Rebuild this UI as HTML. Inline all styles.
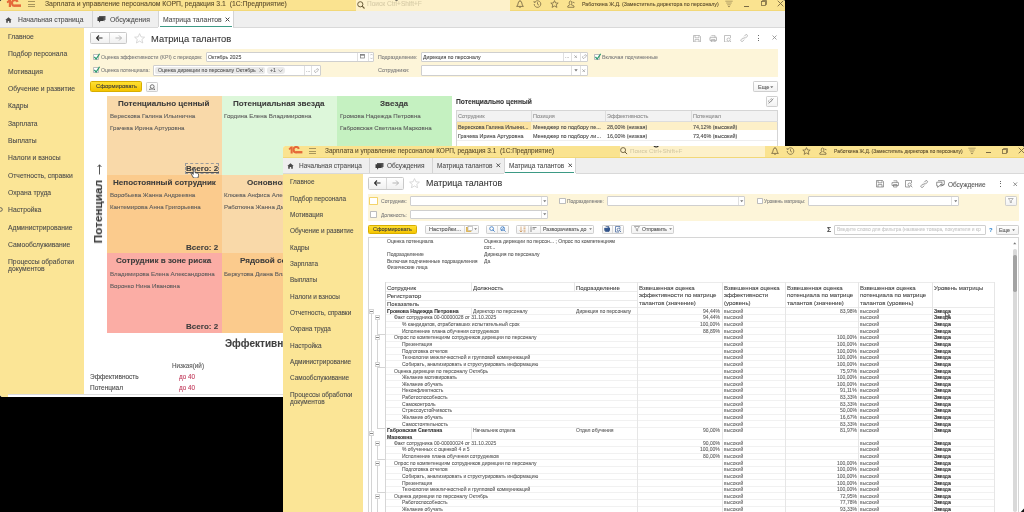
<!DOCTYPE html><html><head><meta charset="utf-8"><style>
html,body{margin:0;padding:0;width:1024px;height:512px;overflow:hidden;background:#000}
.a{position:absolute}
.t{position:absolute;white-space:pre;line-height:1.3;font-family:"Liberation Sans",sans-serif;-webkit-text-stroke:0.08px currentColor}
body{font-family:"Liberation Sans",sans-serif;position:relative}
.t{will-change:transform}
</style></head><body>
<div class="a" style="left:0;top:0;width:785px;height:397px;overflow:hidden;background:#fff;border-top-left-radius:2.5px;border-top-right-radius:2px;border-bottom-left-radius:3px">
<div class="a" style="left:0px;top:0px;width:785px;height:11.25px;background:#FAE390;"></div>
<div class="a" style="left:0px;top:10.25px;width:785px;height:1px;background:#F2D878;"></div>
<svg class="a" style="left:5.6px;top:-0.9px;" width="15.4" height="8.2" viewBox="0 0 15.4 8.2"><path d="M0.6 2.8 L3.0 0.5 L5.0 0.5 L5.0 7.9 L2.8 7.9 L2.8 3.4 L1.4 4.2 Z" fill="#E5693A"/><path d="M11.6 3.0 A2.9 2.9 0 1 0 8.9 6.9" fill="none" stroke="#E5693A" stroke-width="2.2"/><rect x="8.4" y="5.4" width="7.0" height="2.5" fill="#E5693A"/></svg>
<div class="a" style="left:27.9px;top:1px;width:7.1px;height:0.9px;background:#A8965C;"></div>
<div class="a" style="left:27.9px;top:3.5px;width:7.1px;height:0.9px;background:#A8965C;"></div>
<div class="a" style="left:27.9px;top:6px;width:7.1px;height:0.9px;background:#A8965C;"></div>
<div class="t" style="left:44.75px;top:-0.2px;font-size:6.83px;color:#5A4B2C;">Зарплата и управление персоналом КОРП, редакция 3.1  (1С:Предприятие)</div>
<div class="a" style="left:356px;top:0px;width:154px;height:11.25px;background:#FDF1CA;"></div>
<svg class="a" style="left:357px;top:1px;" width="8" height="8" viewBox="0 0 8 8"><circle cx="3.3" cy="3.3" r="2.6" fill="none" stroke="#6b5d3a" stroke-width="1"/><line x1="5.2" y1="5.2" x2="7.5" y2="7.5" stroke="#6b5d3a" stroke-width="1.1"/></svg>
<div class="t" style="left:366.6px;top:-0.01px;font-size:6.54px;color:#D6CBA6;">Поиск Ctrl+Shift+F</div>
<svg class="a" style="left:394px;top:-1px;" width="5" height="3" viewBox="0 0 5 3"><path d="M0.3 0.3 Q2.5 2.8 4.7 0.3" fill="none" stroke="#333" stroke-width="0.9"/></svg>
<svg class="a" style="left:515.5px;top:-0.4px;" width="8" height="8" viewBox="0 0 8 8"><path d="M0.6 6.4 L7.4 6.4 Q6 5.4 5.8 3 Q5.6 1.1 4 1 Q2.4 1.1 2.2 3 Q2 5.4 0.6 6.4 Z M3.2 7 Q4 8.2 4.8 7 M4 0.3 V1" fill="none" stroke="#7a6a44" stroke-width="0.85"/></svg>
<svg class="a" style="left:532.5px;top:-0.4px;" width="9" height="8" viewBox="0 0 9 8"><path d="M1.2 4 A3.3 3.3 0 1 0 2.3 1.6 M1 1 L1.2 2.5 L2.6 2.2 M4.5 2.2 L4.5 4.2 L6 5.2" fill="none" stroke="#7a6a44" stroke-width="0.8"/></svg>
<svg class="a" style="left:549.5px;top:-0.4px;" width="9" height="8" viewBox="0 0 9 8"><path d="M4.5 0.6 L5.6 3 L8.2 3.1 L6.2 4.8 L6.9 7.4 L4.5 6 L2.1 7.4 L2.8 4.8 L0.8 3.1 L3.4 3 Z" fill="none" stroke="#7a6a44" stroke-width="0.8"/></svg>
<svg class="a" style="left:566.5px;top:-0.4px;" width="9" height="8" viewBox="0 0 9 8"><path d="M3 4.5 Q1.5 3.5 2.5 1.5 Q3.5 0.5 4.5 1.5 Q5.5 3.5 4 4.5 L7 6 L7 7.3 L0.8 7.3 L0.8 6 Z M5.5 2 L7.5 2.8" fill="none" stroke="#7a6a44" stroke-width="0.8"/></svg>
<div class="t" style="left:582px;top:1.13px;font-size:5.29px;color:#5A4B2C;">Работкина Ж.Д. (Заместитель директора по персоналу)</div>
<svg class="a" style="left:724.5px;top:-0.2px;" width="8" height="9" viewBox="0 0 8 9"><path d="M0.3 1.2 H7.7 M1.2 3.0 H6.8 M2.2 4.8 H5.8" fill="none" stroke="#7a6a44" stroke-width="0.55"/><path d="M2.9 6.0 H5.1 L4 7.3 Z" fill="#7a6a44"/></svg>
<div class="a" style="left:744px;top:5.6px;width:4.6px;height:0.8px;background:#7a6a44;"></div>
<svg class="a" style="left:760.5px;top:0.1px;" width="6" height="6" viewBox="0 0 6 6"><rect x="0.5" y="1.5" width="4" height="4" fill="none" stroke="#7a6a44" stroke-width="0.8"/><path d="M1.5 1.5 V0.5 H5.5 V4.5 H4.5" fill="none" stroke="#7a6a44" stroke-width="0.8"/></svg>
<svg class="a" style="left:777px;top:-0.4px;" width="7" height="7" viewBox="0 0 7 7"><path d="M0.7 0.7 L6.3 6.3 M6.3 0.7 L0.7 6.3" stroke="#7a6a44" stroke-width="0.9"/></svg>
<div class="a" style="left:0px;top:11.25px;width:785px;height:16.25px;background:#EFEFEF;"></div>
<div class="a" style="left:0px;top:27px;width:785px;height:0.7px;background:#D9D9D9;"></div>
<svg class="a" style="left:4.5px;top:16.5px;" width="7" height="6" viewBox="0 0 7 6"><path d="M0.3 3 L3.5 0.2 L6.7 3 L5.8 3 L5.8 5.8 L4.2 5.8 L4.2 4 L2.8 4 L2.8 5.8 L1.2 5.8 L1.2 3 Z" fill="#4a4a4a"/></svg>
<div class="t" style="left:17.5px;top:15.84px;font-size:6.78px;color:#4d4d4d;">Начальная страница</div>
<div class="a" style="left:92.2px;top:11.25px;width:0.7px;height:15.95px;background:#D4D4D4;"></div>
<svg class="a" style="left:96.9px;top:15.2px;" width="9" height="8" viewBox="0 0 9 8"><path d="M2 1 H8.5 V5 H7.5 L7.5 6.5 L6 5 H2 Z" fill="#555"/><path d="M0.5 2.2 H6.5 V6 H3.5 L2 7.8 L2 6 H0.5 Z" fill="#3c3c3c"/></svg>
<div class="t" style="left:110px;top:15.86px;font-size:6.87px;color:#4d4d4d;">Обсуждения</div>
<div class="a" style="left:158px;top:11.25px;width:75px;height:16.25px;background:#FFFFFF;"></div>
<div class="a" style="left:157.6px;top:11.25px;width:0.7px;height:15.95px;background:#D4D4D4;"></div>
<div class="a" style="left:233px;top:11.25px;width:0.7px;height:15.95px;background:#D4D4D4;"></div>
<div class="a" style="left:160px;top:25.8px;width:72px;height:1.2px;background:#3D9A85;"></div>
<div class="t" style="left:163.25px;top:15.78px;font-size:6.84px;color:#4d4d4d;">Матрица талантов</div>
<svg class="a" style="left:225.3px;top:17.3px;" width="5" height="5" viewBox="0 0 5 5"><path d="M0.6 0.6 L4.4 4.4 M4.4 0.6 L0.6 4.4" stroke="#444" stroke-width="1"/></svg>
<div class="a" style="left:0px;top:27.5px;width:84px;height:366.9px;background:#FBE596;"></div>
<div class="a" style="left:0px;top:394px;width:7.8px;height:3px;background:#FBE596;"></div>
<div class="t" style="left:7.5px;top:32.84px;font-size:6.78px;color:#4a4a4a;">Главное</div>
<div class="t" style="left:7.5px;top:49.84px;font-size:6.78px;color:#4a4a4a;">Подбор персонала</div>
<div class="t" style="left:7.5px;top:67.84px;font-size:6.78px;color:#4a4a4a;">Мотивация</div>
<div class="t" style="left:7.5px;top:84.84px;font-size:6.78px;color:#4a4a4a;">Обучение и развитие</div>
<div class="t" style="left:7.5px;top:101.84px;font-size:6.78px;color:#4a4a4a;">Кадры</div>
<div class="t" style="left:7.5px;top:119.84px;font-size:6.78px;color:#4a4a4a;">Зарплата</div>
<div class="t" style="left:7.5px;top:136.84px;font-size:6.78px;color:#4a4a4a;">Выплаты</div>
<div class="t" style="left:7.5px;top:153.84px;font-size:6.78px;color:#4a4a4a;">Налоги и взносы</div>
<div class="t" style="left:7.5px;top:171.84px;font-size:6.78px;color:#4a4a4a;">Отчетность, справки</div>
<div class="t" style="left:7.5px;top:188.84px;font-size:6.78px;color:#4a4a4a;">Охрана труда</div>
<div class="t" style="left:7.5px;top:205.84px;font-size:6.78px;color:#4a4a4a;">Настройка</div>
<div class="t" style="left:7.5px;top:223.84px;font-size:6.78px;color:#4a4a4a;">Администрирование</div>
<div class="t" style="left:7.5px;top:240.84px;font-size:6.78px;color:#4a4a4a;">Самообслуживание</div>
<div class="t" style="left:7.5px;top:257.84px;font-size:6.78px;color:#4a4a4a;">Процессы обработки</div>
<div class="t" style="left:7.5px;top:264.84px;font-size:6.78px;color:#4a4a4a;">документов</div>
<svg class="a" style="left:-2px;top:206.5px;" width="5" height="5" viewBox="0 0 5 5"><circle cx="2.5" cy="2.5" r="1.8" fill="none" stroke="#555" stroke-width="0.9"/></svg>
<div class="a" style="left:90.25px;top:32.4px;width:37.15px;height:12px;background:linear-gradient(#fff,#f0f0f0);box-sizing:border-box;border:1px solid #C9C9C9;border-radius:1.5px;"></div>
<div class="a" style="left:109.3px;top:33.4px;width:0.7px;height:10px;background:#D8D8D8;"></div>
<svg class="a" style="left:96.28px;top:35.4px;" width="7" height="6" viewBox="0 0 7 6"><path d="M0.5 3 H6.5 M3 0.5 L0.5 3 L3 5.5" fill="none" stroke="#333" stroke-width="1.2"/></svg>
<svg class="a" style="left:114.85px;top:35.4px;" width="7" height="6" viewBox="0 0 7 6"><path d="M0.5 3 H6.5 M4 0.5 L6.5 3 L4 5.5" fill="none" stroke="#B5B5B5" stroke-width="1"/></svg>
<svg class="a" style="left:134px;top:33.3px;" width="11.2" height="10.6" viewBox="0 0 11.2 10.6"><path d="M5.6 0.6 L7.1 3.9 L10.6 4.2 L7.9 6.5 L8.8 10 L5.6 8.1 L2.4 10 L3.3 6.5 L0.6 4.2 L4.1 3.9 Z" fill="none" stroke="#CFCFCF" stroke-width="0.8"/></svg>
<div class="t" style="left:150.9px;top:33.08px;font-size:9.35px;color:#333333;">Матрица талантов</div>
<svg class="a" style="left:693px;top:34.6px;" width="8" height="7.5" viewBox="0 0 8 7.5"><path d="M0.5 0.5 H6.5 L7.5 1.5 V7 H0.5 Z M2 0.5 V2.8 H6 V0.5 M2 7 V4.6 H6 V7" fill="none" stroke="#A8A8A8" stroke-width="0.7"/></svg>
<svg class="a" style="left:708.5px;top:34.6px;" width="8.5" height="7.5" viewBox="0 0 8.5 7.5"><circle cx="4.25" cy="3.75" r="3.6" fill="none" stroke="#ddd" stroke-width="0.6"/><path d="M2.5 0.8 H6 V2.6 M1 2.6 H7.5 V5.5 H1 Z M2.5 4.5 H6 V7 H2.5 Z" fill="none" stroke="#A8A8A8" stroke-width="0.7"/></svg>
<svg class="a" style="left:724.3px;top:34.6px;" width="8" height="7.5" viewBox="0 0 8 7.5"><path d="M5 7 H0.5 V0.5 H6.5 V3" fill="none" stroke="#A8A8A8" stroke-width="0.7"/><circle cx="4.6" cy="4.6" r="1.6" fill="none" stroke="#A8A8A8" stroke-width="0.7"/><path d="M5.8 5.8 L7.3 7.2" stroke="#A8A8A8" stroke-width="0.8"/></svg>
<svg class="a" style="left:739.6px;top:34.4px;" width="8.5" height="8" viewBox="0 0 8.5 8"><path d="M3.2 3.6 L1.2 5.6 Q0.3 6.8 1.4 7.3 Q2.3 7.8 3.2 6.8 L4.3 5.7 M5.2 4.4 L7.2 2.4 Q8 1.2 7 0.7 Q6 0.2 5.2 1.2 L4.1 2.3 M3 5.3 L5.5 2.8" fill="none" stroke="#A8A8A8" stroke-width="0.75"/></svg>
<div class="a" style="left:758px;top:35.2px;width:1.3px;height:1.3px;background:#6a6a6a;"></div>
<div class="a" style="left:758px;top:37.7px;width:1.3px;height:1.3px;background:#6a6a6a;"></div>
<div class="a" style="left:758px;top:40.2px;width:1.3px;height:1.3px;background:#6a6a6a;"></div>
<svg class="a" style="left:772.3px;top:35.3px;" width="5" height="5" viewBox="0 0 5 5"><path d="M0.5 0.5 L4.5 4.5 M4.5 0.5 L0.5 4.5" stroke="#8a8a8a" stroke-width="0.8"/></svg>
<div class="a" style="left:90px;top:49px;width:687.7px;height:28px;background:#FDF5D9;"></div>
<div class="a" style="left:92.6px;top:53.6px;width:6.2px;height:6px;background:#fff;box-sizing:border-box;border:1px solid #BDBDBD;border-radius:0.8px;"></div>
<svg class="a" style="left:92.6px;top:52.6px;" width="7.2" height="7" viewBox="0 0 7 7"><path d="M1.2 3.8 L3 6 L6.5 0.8" fill="none" stroke="#2E9A6E" stroke-width="1.3"/></svg>
<div class="t" style="left:101px;top:54.12px;font-size:5.2px;color:#7d7d7d;">Оценка эффективности (KPI) с периодом:</div>
<div class="a" style="left:205.6px;top:51.5px;width:168.7px;height:10.1px;background:#fff;box-sizing:border-box;border:1px solid #CFCFCF;border-radius:1px;"></div>
<div class="a" style="left:357px;top:52.5px;width:0.6px;height:8.1px;background:#E0E0E0;"></div>
<div class="a" style="left:368px;top:52.5px;width:0.6px;height:8.1px;background:#E0E0E0;"></div>
<svg class="a" style="left:360px;top:54.3px;" width="5" height="4.5" viewBox="0 0 5 4.5"><rect x="0.4" y="0.4" width="4" height="3.6" fill="none" stroke="#777" stroke-width="0.7"/><rect x="0.4" y="0.4" width="4" height="1.2" fill="#777"/></svg>
<svg class="a" style="left:369.8px;top:53px;" width="3" height="7" viewBox="0 0 3 7"><path d="M0.3 2.3 L1.5 1 L2.7 2.3 M0.3 4.7 L1.5 6 L2.7 4.7" fill="none" stroke="#999" stroke-width="0.5"/></svg>
<div class="t" style="left:207.5px;top:54.1px;font-size:5.22px;color:#4a4a4a;">Октябрь 2025</div>
<div class="t" style="left:378px;top:54.1px;font-size:5.22px;color:#7d7d7d;">Подразделение:</div>
<div class="a" style="left:420.5px;top:51.5px;width:167.5px;height:10.1px;background:#fff;box-sizing:border-box;border:1px solid #CFCFCF;border-radius:1px;"></div>
<div class="t" style="left:422.5px;top:54.1px;font-size:5.22px;color:#4a4a4a;">Дирекция по персоналу</div>
<div class="a" style="left:562.5px;top:52.5px;width:0.6px;height:8.1px;background:#E0E0E0;"></div>
<div class="a" style="left:571.3px;top:52.5px;width:0.6px;height:8.1px;background:#E0E0E0;"></div>
<div class="a" style="left:579.8px;top:52.5px;width:0.6px;height:8.1px;background:#E0E0E0;"></div>
<div class="t" style="left:565px;top:53.22px;font-size:5px;color:#999;">...</div>
<svg class="a" style="left:573.8px;top:54.9px;" width="3.5" height="3.5" viewBox="0 0 3.5 3.5"><path d="M0.3 0.3 L3.2 3.2 M3.2 0.3 L0.3 3.2" stroke="#888" stroke-width="0.6"/></svg>
<svg class="a" style="left:581.8px;top:53.9px;" width="5" height="5" viewBox="0 0 5 5"><path d="M1.2 2.2 L0.6 2.8 Q0 3.8 1 4.3 Q1.8 4.6 2.4 4 L3 3.4 M2 1.8 L2.6 1.2 Q3.4 0.4 4.2 1 Q4.7 1.8 4 2.6 L3.4 3.2" fill="none" stroke="#888" stroke-width="0.6"/></svg>
<div class="a" style="left:593.8px;top:53.6px;width:6.4px;height:6px;background:#fff;box-sizing:border-box;border:1px solid #BDBDBD;border-radius:0.8px;"></div>
<svg class="a" style="left:593.8px;top:52.6px;" width="7.4" height="7" viewBox="0 0 7 7"><path d="M1.2 3.8 L3 6 L6.5 0.8" fill="none" stroke="#2E9A6E" stroke-width="1.3"/></svg>
<div class="t" style="left:602.3px;top:54.11px;font-size:5.31px;color:#7d7d7d;">Включая подчиненные</div>
<div class="a" style="left:92.6px;top:67px;width:6.2px;height:6px;background:#fff;box-sizing:border-box;border:1px solid #BDBDBD;border-radius:0.8px;"></div>
<svg class="a" style="left:92.6px;top:66px;" width="7.2" height="7" viewBox="0 0 7 7"><path d="M1.2 3.8 L3 6 L6.5 0.8" fill="none" stroke="#2E9A6E" stroke-width="1.3"/></svg>
<div class="t" style="left:101px;top:67.15px;font-size:5.17px;color:#7d7d7d;">Оценка потенциала:</div>
<div class="a" style="left:152.5px;top:65px;width:168.5px;height:10.7px;background:#fff;box-sizing:border-box;border:1px solid #CFCFCF;border-radius:1px;"></div>
<div class="a" style="left:154.8px;top:66.6px;width:110.2px;height:7.5px;background:#EAEAEA;border-radius:2px"></div>
<div class="t" style="left:157.5px;top:67.12px;font-size:5.2px;color:#555;">Оценка дирекции по персоналу Октябрь</div>
<svg class="a" style="left:258.5px;top:68.3px;" width="4.5" height="4.5" viewBox="0 0 4.5 4.5"><path d="M0.4 0.4 L4.1 4.1 M4.1 0.4 L0.4 4.1" stroke="#666" stroke-width="0.6"/></svg>
<div class="a" style="left:267.3px;top:66.6px;width:18px;height:7.5px;background:#EAEAEA;border-radius:3px"></div>
<div class="t" style="left:270px;top:67.12px;font-size:5.3px;color:#555;">+1</div>
<svg class="a" style="left:277.5px;top:68.8px;" width="5" height="3.5" viewBox="0 0 5 3.5"><path d="M0.4 0.6 L2.5 2.8 L4.6 0.6" fill="none" stroke="#666" stroke-width="0.6"/></svg>
<div class="a" style="left:303.7px;top:66px;width:0.6px;height:8.7px;background:#E0E0E0;"></div>
<div class="a" style="left:311.2px;top:66px;width:0.6px;height:8.7px;background:#E0E0E0;"></div>
<div class="t" style="left:305.5px;top:67.22px;font-size:5px;color:#999;">...</div>
<svg class="a" style="left:313.5px;top:68px;" width="5" height="5" viewBox="0 0 5 5"><path d="M1.2 2.2 L0.6 2.8 Q0 3.8 1 4.3 Q1.8 4.6 2.4 4 L3 3.4 M2 1.8 L2.6 1.2 Q3.4 0.4 4.2 1 Q4.7 1.8 4 2.6 L3.4 3.2" fill="none" stroke="#888" stroke-width="0.6"/></svg>
<div class="t" style="left:378px;top:66.99px;font-size:5.53px;color:#7d7d7d;">Сотрудники:</div>
<div class="a" style="left:420.5px;top:65px;width:167.5px;height:10.7px;background:#fff;box-sizing:border-box;border:1px solid #CFCFCF;border-radius:1px;"></div>
<div class="a" style="left:571px;top:66px;width:0.6px;height:8.7px;background:#E0E0E0;"></div>
<div class="a" style="left:579.5px;top:66px;width:0.6px;height:8.7px;background:#E0E0E0;"></div>
<svg class="a" style="left:573.5px;top:69.2px;" width="4" height="3" viewBox="0 0 4 3"><path d="M0.3 0.3 H3.7 L2 2.5 Z" fill="#777"/></svg>
<svg class="a" style="left:582px;top:68.5px;" width="3.5" height="3.5" viewBox="0 0 3.5 3.5"><path d="M0.3 0.3 L3.2 3.2 M3.2 0.3 L0.3 3.2" stroke="#888" stroke-width="0.6"/></svg>
<div class="a" style="left:90.25px;top:81px;width:51.55px;height:10.75px;background:linear-gradient(#FFE033,#F5C400);box-sizing:border-box;border:1px solid #D8AE00;border-radius:1.5px;"></div>
<div class="t" style="left:95.5px;top:82.8px;font-size:5.82px;color:#3a3a3a;">Сформировать</div>
<div class="a" style="left:146px;top:81.6px;width:11.5px;height:10.5px;background:linear-gradient(#fff,#f2f2f2);box-sizing:border-box;border:1px solid #CFCFCF;border-radius:1.2px;"></div>
<svg class="a" style="left:148.5px;top:83.6px;" width="6.5" height="6.5" viewBox="0 0 6.5 6.5"><circle cx="3.2" cy="2.6" r="1.9" fill="none" stroke="#555" stroke-width="0.8"/><path d="M1.2 4.4 L0.6 6 M5.2 4.4 L5.8 6 M0.5 6 H6" fill="none" stroke="#555" stroke-width="0.8"/></svg>
<div class="a" style="left:753px;top:81px;width:24.5px;height:11px;background:linear-gradient(#fff,#f2f2f2);box-sizing:border-box;border:1px solid #CFCFCF;border-radius:1.2px;"></div>
<div class="t" style="left:757.5px;top:83.92px;font-size:5.6px;color:#555;">Еще</div>
<svg class="a" style="left:770px;top:85.8px;" width="3.5" height="2.5" viewBox="0 0 3.5 2.5"><path d="M0.2 0.2 H3.3 L1.75 2.2 Z" fill="#777"/></svg>
<div class="a" style="left:765.5px;top:96px;width:12px;height:10.5px;background:linear-gradient(#fff,#f2f2f2);box-sizing:border-box;border:1px solid #CFCFCF;border-radius:1.2px;"></div>
<svg class="a" style="left:768.3px;top:98.3px;" width="6.5" height="6" viewBox="0 0 6.5 6"><path d="M1.2 2.2 L0.6 2.8 Q0 3.8 1 4.3 Q1.8 4.6 2.4 4 L3 3.4 M2 1.8 L2.6 1.2 Q3.4 0.4 4.2 1 Q4.7 1.8 4 2.6 L3.4 3.2 M0.5 5.5 L5.5 0.5" fill="none" stroke="#777" stroke-width="0.6"/></svg>
<div class="a" style="left:106.7px;top:96px;width:115.4px;height:79.2px;background:#F9D9A9;"></div>
<div class="t" style="left:118.38px;top:98.76px;font-size:8.07px;color:#3c3c3c;font-weight:bold;">Потенциально ценный</div>
<div class="t" style="left:109.5px;top:112.17px;font-size:6.15px;color:#5a5a5a;">Верескова Галина Ильинична</div>
<div class="t" style="left:109.5px;top:124.17px;font-size:6.15px;color:#5a5a5a;">Грачева Ирина Артуровна</div>
<div class="t" style="left:186.38px;top:163.73px;font-size:8px;color:#3c3c3c;font-weight:bold;">Всего: 2</div>
<div class="a" style="left:221.5px;top:96px;width:115.8px;height:79.2px;background:#DDF7DA;"></div>
<div class="t" style="left:233.29px;top:98.76px;font-size:8.07px;color:#3c3c3c;font-weight:bold;">Потенциальная звезда</div>
<div class="t" style="left:224.3px;top:112.17px;font-size:6.15px;color:#5a5a5a;">Гордина Елена Владимировна</div>
<div class="t" style="left:301.58px;top:163.73px;font-size:8px;color:#3c3c3c;font-weight:bold;">Всего: 2</div>
<div class="a" style="left:336.7px;top:96px;width:115.4px;height:79.2px;background:#C5F1C1;"></div>
<div class="t" style="left:380.09px;top:98.76px;font-size:8.07px;color:#3c3c3c;font-weight:bold;">Звезда</div>
<div class="t" style="left:339.5px;top:112.17px;font-size:6.15px;color:#5a5a5a;">Громова Надежда Петровна</div>
<div class="t" style="left:339.5px;top:124.17px;font-size:6.15px;color:#5a5a5a;">Габровская Светлана Марковна</div>
<div class="t" style="left:416.38px;top:163.73px;font-size:8px;color:#3c3c3c;font-weight:bold;">Всего: 2</div>
<div class="a" style="left:106.7px;top:174.6px;width:115.4px;height:79.3px;background:#FBCB8D;"></div>
<div class="t" style="left:112.6px;top:177.76px;font-size:8.07px;color:#3c3c3c;font-weight:bold;">Непостоянный сотрудник</div>
<div class="t" style="left:109.5px;top:191.17px;font-size:6.15px;color:#5a5a5a;">Воробьева Жанна Андреевна</div>
<div class="t" style="left:109.5px;top:203.17px;font-size:6.15px;color:#5a5a5a;">Кантемирова Анна Григорьевна</div>
<div class="t" style="left:186.38px;top:242.73px;font-size:8px;color:#3c3c3c;font-weight:bold;">Всего: 2</div>
<div class="a" style="left:221.5px;top:174.6px;width:115.8px;height:79.3px;background:#F9D9A9;"></div>
<div class="t" style="left:246.72px;top:177.76px;font-size:8.07px;color:#3c3c3c;font-weight:bold;">Основной игрок</div>
<div class="t" style="left:224.3px;top:191.17px;font-size:6.15px;color:#5a5a5a;">Клюева Анфиса Александровна</div>
<div class="t" style="left:224.3px;top:203.17px;font-size:6.15px;color:#5a5a5a;">Работкина Жанна Дмитриевна</div>
<div class="t" style="left:301.58px;top:242.73px;font-size:8px;color:#3c3c3c;font-weight:bold;">Всего: 2</div>
<div class="a" style="left:336.7px;top:174.6px;width:115.4px;height:79.3px;background:#F9D9A9;"></div>
<div class="t" style="left:348.29px;top:177.76px;font-size:8.07px;color:#3c3c3c;font-weight:bold;">Потенциальная звезда</div>
<div class="t" style="left:416.38px;top:242.73px;font-size:8px;color:#3c3c3c;font-weight:bold;">Всего: 2</div>
<div class="a" style="left:106.7px;top:253.3px;width:115.4px;height:79.55px;background:#FBADA5;"></div>
<div class="t" style="left:116.45px;top:255.76px;font-size:8.07px;color:#3c3c3c;font-weight:bold;">Сотрудник в зоне риска</div>
<div class="t" style="left:109.5px;top:270.17px;font-size:6.15px;color:#5a5a5a;">Владимирова Елена Александровна</div>
<div class="t" style="left:109.5px;top:282.17px;font-size:6.15px;color:#5a5a5a;">Воронко Нина Ивановна</div>
<div class="t" style="left:186.38px;top:321.73px;font-size:8px;color:#3c3c3c;font-weight:bold;">Всего: 2</div>
<div class="a" style="left:221.5px;top:253.3px;width:115.8px;height:79.55px;background:#FBCB8D;"></div>
<div class="t" style="left:239.95px;top:255.76px;font-size:8.07px;color:#3c3c3c;font-weight:bold;">Рядовой сотрудник</div>
<div class="t" style="left:224.3px;top:270.17px;font-size:6.15px;color:#5a5a5a;">Беркутова Диана Владимировна</div>
<div class="t" style="left:301.58px;top:321.73px;font-size:8px;color:#3c3c3c;font-weight:bold;">Всего: 2</div>
<div class="a" style="left:336.7px;top:253.3px;width:115.4px;height:79.55px;background:#F9D9A9;"></div>
<div class="t" style="left:352.19px;top:255.76px;font-size:8.07px;color:#3c3c3c;font-weight:bold;">Основной сотрудник</div>
<div class="t" style="left:416.38px;top:321.73px;font-size:8px;color:#3c3c3c;font-weight:bold;">Всего: 2</div>
<div class="a" style="left:184.5px;top:162.5px;width:34.7px;height:11.5px;box-sizing:border-box;border:0.6px dashed #9a9a9a"></div>
<div class="a" style="left:185.5px;top:171.6px;width:33px;height:0.7px;background:#555;"></div>
<svg class="a" style="left:190.5px;top:167.8px;" width="8.5" height="10.5" viewBox="0 0 8.5 10.5"><path d="M2.3 0.8 Q3.2 0.1 4 0.9 L4 4.6 L6.8 5.3 Q8 5.8 7.7 7.2 L6.9 10 L2.6 10 L0.6 6.6 Q0.3 5.6 1.5 5.7 L2.3 6.4 Z" fill="#fff" stroke="#222" stroke-width="0.7"/></svg>
<div class="t" style="left:66.70px;top:204.37px;width:63.43px;font-size:11.8px;font-weight:bold;color:#383838;transform:rotate(-90deg);">Потенциал</div>
<svg class="a" style="left:96.8px;top:164.2px;" width="5" height="11" viewBox="0 0 5 11"><path d="M2.5 0.8 V10.5 M0.6 3 L2.5 0.8 L4.4 3" fill="none" stroke="#444" stroke-width="0.9"/></svg>
<div class="t" style="left:225px;top:337.24px;font-size:10px;color:#404040;font-weight:bold;">Эффективность →</div>
<div class="t" style="left:172px;top:362.12px;font-size:6.3px;color:#555;">Низкая(ий)</div>
<div class="t" style="left:90px;top:373.03px;font-size:6.49px;color:#444;">Эффективность</div>
<div class="t" style="left:179px;top:373.12px;font-size:6.3px;color:#C0395A;">до 40</div>
<div class="t" style="left:90px;top:384.02px;font-size:6.5px;color:#444;">Потенциал</div>
<div class="t" style="left:179px;top:384.12px;font-size:6.3px;color:#C0395A;">до 40</div>
<div class="a" style="left:7.5px;top:394.2px;width:777.5px;height:0.8px;background:#DEDEDE;"></div>
<div class="t" style="left:455.6px;top:97.93px;font-size:6.69px;color:#333;font-weight:bold;">Потенциально ценный</div>
<div class="a" style="left:456px;top:110px;width:322px;height:40px;background:#fff;box-sizing:border-box;border:1px solid #D5D5D5;border-radius:0px;"></div>
<div class="a" style="left:457px;top:111px;width:320px;height:10.4px;background:#F2F2F2;"></div>
<div class="a" style="left:456px;top:121.4px;width:322px;height:0.6px;background:#DDDDDD;"></div>
<div class="a" style="left:530.6px;top:111px;width:0.6px;height:10.4px;background:#DDDDDD;"></div>
<div class="a" style="left:605px;top:111px;width:0.6px;height:10.4px;background:#DDDDDD;"></div>
<div class="a" style="left:691.25px;top:111px;width:0.6px;height:10.4px;background:#DDDDDD;"></div>
<div class="t" style="left:458px;top:113.02px;font-size:5.5px;color:#8a8a8a;">Сотрудник</div>
<div class="t" style="left:532.6px;top:113.02px;font-size:5.5px;color:#8a8a8a;">Позиция</div>
<div class="t" style="left:607px;top:113.02px;font-size:5.5px;color:#8a8a8a;">Эффективность</div>
<div class="t" style="left:693.25px;top:113.02px;font-size:5.5px;color:#8a8a8a;">Потенциал</div>
<div class="a" style="left:457px;top:122px;width:73.6px;height:8.3px;background:#FBE3A0;"></div>
<div class="a" style="left:530.6px;top:122px;width:246.4px;height:8.3px;background:#FDF0C8;"></div>
<div class="t" style="left:458.2px;top:123.52px;font-size:5.4px;color:#444;">Верескова Галина Ильини...</div>
<div class="t" style="left:532.8px;top:123.52px;font-size:5.4px;color:#444;">Менеджер по подбору пе...</div>
<div class="t" style="left:607.2px;top:123.52px;font-size:5.4px;color:#444;">28,00% (низкая)</div>
<div class="t" style="left:693.45px;top:123.52px;font-size:5.4px;color:#444;">74,12% (высокий)</div>
<div class="t" style="left:458.2px;top:132.52px;font-size:5.4px;color:#444;">Грачева Ирина Артуровна</div>
<div class="t" style="left:532.8px;top:132.52px;font-size:5.4px;color:#444;">Менеджер по подбору ли...</div>
<div class="t" style="left:607.2px;top:132.52px;font-size:5.4px;color:#444;">16,00% (низкая)</div>
<div class="t" style="left:693.45px;top:132.52px;font-size:5.4px;color:#444;">73,46% (высокий)</div>
<div class="a" style="left:457px;top:139.7px;width:320px;height:0.6px;background:#EEEEEE;"></div>
</div>
<div class="a" style="left:283px;top:145.5px;width:741px;height:366.5px;overflow:hidden;background:#fff;border-top-left-radius:2.5px;border-top-right-radius:2px">
<div class="a" style="left:-283px;top:-145.5px;width:1024px;height:512px">
<div class="a" style="left:283px;top:145.5px;width:741px;height:12px;background:#FAE390;"></div>
<div class="a" style="left:283px;top:156.6px;width:741px;height:0.9px;background:#F2D878;"></div>
<svg class="a" style="left:288.4px;top:146.3px;" width="14.4" height="7.7" viewBox="0 0 15.4 8.2"><path d="M0.6 2.8 L3.0 0.5 L5.0 0.5 L5.0 7.9 L2.8 7.9 L2.8 3.4 L1.4 4.2 Z" fill="#E5693A"/><path d="M11.6 3.0 A2.9 2.9 0 1 0 8.9 6.9" fill="none" stroke="#E5693A" stroke-width="2.2"/><rect x="8.4" y="5.4" width="7.0" height="2.5" fill="#E5693A"/></svg>
<div class="a" style="left:309px;top:148.1px;width:7px;height:0.9px;background:#A8965C;"></div>
<div class="a" style="left:309px;top:150.6px;width:7px;height:0.9px;background:#A8965C;"></div>
<div class="a" style="left:309px;top:153.1px;width:7px;height:0.9px;background:#A8965C;"></div>
<div class="t" style="left:324.75px;top:147.05px;font-size:6.47px;color:#5A4B2C;">Зарплата и управление персоналом КОРП, редакция 3.1  (1С:Предприятие)</div>
<div class="a" style="left:619.5px;top:145.5px;width:145.5px;height:11.5px;background:#FDF1CA;"></div>
<svg class="a" style="left:620.3px;top:147.3px;" width="7.5" height="7.5" viewBox="0 0 7.5 7.5"><circle cx="3.1" cy="3.1" r="2.5" fill="none" stroke="#6b5d3a" stroke-width="0.9"/><line x1="4.9" y1="4.9" x2="7.1" y2="7.1" stroke="#6b5d3a" stroke-width="1"/></svg>
<div class="t" style="left:629.7px;top:147.16px;font-size:6.26px;color:#D6CBA6;">Поиск Ctrl+Shift+F</div>
<svg class="a" style="left:652.6px;top:145.4px;" width="6.4" height="3.6" viewBox="0 0 6.4 3.6"><path d="M0.6 0.5 Q3.2 3.6 5.8 0.5" fill="none" stroke="#222" stroke-width="1.1"/></svg>
<svg class="a" style="left:770.5px;top:146.5px;" width="8" height="8" viewBox="0 0 8 8"><path d="M0.6 6.4 L7.4 6.4 Q6 5.4 5.8 3 Q5.6 1.1 4 1 Q2.4 1.1 2.2 3 Q2 5.4 0.6 6.4 Z M3.2 7 Q4 8.2 4.8 7 M4 0.3 V1" fill="none" stroke="#7a6a44" stroke-width="0.85"/></svg>
<svg class="a" style="left:785.8px;top:146.5px;" width="9" height="8" viewBox="0 0 9 8"><path d="M1.2 4 A3.3 3.3 0 1 0 2.3 1.6 M1 1 L1.2 2.5 L2.6 2.2 M4.5 2.2 L4.5 4.2 L6 5.2" fill="none" stroke="#7a6a44" stroke-width="0.8"/></svg>
<svg class="a" style="left:802.2px;top:146.5px;" width="9" height="8" viewBox="0 0 9 8"><path d="M4.5 0.6 L5.6 3 L8.2 3.1 L6.2 4.8 L6.9 7.4 L4.5 6 L2.1 7.4 L2.8 4.8 L0.8 3.1 L3.4 3 Z" fill="none" stroke="#7a6a44" stroke-width="0.8"/></svg>
<svg class="a" style="left:818.6px;top:146.5px;" width="9" height="8" viewBox="0 0 9 8"><path d="M3 4.5 Q1.5 3.5 2.5 1.5 Q3.5 0.5 4.5 1.5 Q5.5 3.5 4 4.5 L7 6 L7 7.3 L0.8 7.3 L0.8 6 Z M5.5 2 L7.5 2.8" fill="none" stroke="#7a6a44" stroke-width="0.8"/></svg>
<div class="t" style="left:833.5px;top:148.24px;font-size:4.98px;color:#5A4B2C;">Работкина Ж.Д. (Заместитель директора по персоналу)</div>
<svg class="a" style="left:968px;top:146.6px;" width="8" height="9" viewBox="0 0 8 9"><path d="M0.3 1.2 H7.7 M1.2 3.0 H6.8 M2.2 4.8 H5.8" fill="none" stroke="#7a6a44" stroke-width="0.55"/><path d="M2.9 6.0 H5.1 L4 7.3 Z" fill="#7a6a44"/></svg>
<div class="a" style="left:986px;top:152.3px;width:4.5px;height:0.8px;background:#7a6a44;"></div>
<svg class="a" style="left:1002.3px;top:147.6px;" width="6" height="6" viewBox="0 0 6 6"><rect x="0.5" y="1.5" width="4" height="4" fill="none" stroke="#7a6a44" stroke-width="0.8"/><path d="M1.5 1.5 V0.5 H5.5 V4.5 H4.5" fill="none" stroke="#7a6a44" stroke-width="0.8"/></svg>
<svg class="a" style="left:1017.5px;top:147.2px;" width="7" height="7" viewBox="0 0 7 7"><path d="M0.7 0.7 L6.3 6.3 M6.3 0.7 L0.7 6.3" stroke="#7a6a44" stroke-width="0.9"/></svg>
<div class="a" style="left:283px;top:157.5px;width:741px;height:16.25px;background:#EFEFEF;"></div>
<div class="a" style="left:283px;top:173.2px;width:741px;height:0.7px;background:#D9D9D9;"></div>
<svg class="a" style="left:287px;top:163.3px;" width="7" height="6" viewBox="0 0 7 6"><path d="M0.3 3 L3.5 0.2 L6.7 3 L5.8 3 L5.8 5.8 L4.2 5.8 L4.2 4 L2.8 4 L2.8 5.8 L1.2 5.8 L1.2 3 Z" fill="#4a4a4a"/></svg>
<div class="t" style="left:299.25px;top:162.04px;font-size:6.49px;color:#4d4d4d;">Начальная страница</div>
<div class="a" style="left:369.3px;top:157.5px;width:0.7px;height:15.9px;background:#D4D4D4;"></div>
<svg class="a" style="left:374.5px;top:161.5px;" width="9" height="8" viewBox="0 0 9 8"><path d="M2 1 H8.5 V5 H7.5 L7.5 6.5 L6 5 H2 Z" fill="#555"/><path d="M0.5 2.2 H6.5 V6 H3.5 L2 7.8 L2 6 H0.5 Z" fill="#3c3c3c"/></svg>
<div class="t" style="left:387px;top:162.07px;font-size:6.45px;color:#4d4d4d;">Обсуждения</div>
<div class="a" style="left:432.3px;top:157.5px;width:0.7px;height:15.9px;background:#D4D4D4;"></div>
<div class="t" style="left:437px;top:162.06px;font-size:6.46px;color:#4d4d4d;">Матрица талантов</div>
<svg class="a" style="left:496px;top:163.3px;" width="4.6" height="4.6" viewBox="0 0 4.6 4.6"><path d="M0.5 0.5 L4.1 4.1 M4.1 0.5 L0.5 4.1" stroke="#444" stroke-width="0.9"/></svg>
<div class="a" style="left:504px;top:157.5px;width:71.5px;height:16.25px;background:#FFFFFF;"></div>
<div class="a" style="left:503.6px;top:157.5px;width:0.7px;height:15.9px;background:#D4D4D4;"></div>
<div class="a" style="left:575.3px;top:157.5px;width:0.7px;height:15.9px;background:#D4D4D4;"></div>
<div class="a" style="left:505px;top:172px;width:69px;height:1.1px;background:#3D9A85;"></div>
<div class="t" style="left:508.75px;top:161.99px;font-size:6.43px;color:#4d4d4d;">Матрица талантов</div>
<svg class="a" style="left:567.6px;top:163.3px;" width="4.6" height="4.6" viewBox="0 0 4.6 4.6"><path d="M0.5 0.5 L4.1 4.1 M4.1 0.5 L0.5 4.1" stroke="#444" stroke-width="0.9"/></svg>
<div class="a" style="left:283px;top:173.75px;width:79.5px;height:338.25px;background:#FBE596;"></div>
<div class="t" style="left:289.75px;top:178px;font-size:6.42px;color:#4a4a4a;">Главное</div>
<div class="t" style="left:289.75px;top:195px;font-size:6.42px;color:#4a4a4a;">Подбор персонала</div>
<div class="t" style="left:289.75px;top:211px;font-size:6.42px;color:#4a4a4a;">Мотивация</div>
<div class="t" style="left:289.75px;top:227px;font-size:6.42px;color:#4a4a4a;">Обучение и развитие</div>
<div class="t" style="left:289.75px;top:244px;font-size:6.42px;color:#4a4a4a;">Кадры</div>
<div class="t" style="left:289.75px;top:260px;font-size:6.42px;color:#4a4a4a;">Зарплата</div>
<div class="t" style="left:289.75px;top:276px;font-size:6.42px;color:#4a4a4a;">Выплаты</div>
<div class="t" style="left:289.75px;top:293px;font-size:6.42px;color:#4a4a4a;">Налоги и взносы</div>
<div class="t" style="left:289.75px;top:309px;font-size:6.42px;color:#4a4a4a;">Отчетность, справки</div>
<div class="t" style="left:289.75px;top:325px;font-size:6.42px;color:#4a4a4a;">Охрана труда</div>
<div class="t" style="left:289.75px;top:342px;font-size:6.42px;color:#4a4a4a;">Настройка</div>
<div class="t" style="left:289.75px;top:358px;font-size:6.42px;color:#4a4a4a;">Администрирование</div>
<div class="t" style="left:289.75px;top:374px;font-size:6.42px;color:#4a4a4a;">Самообслуживание</div>
<div class="t" style="left:289.75px;top:391px;font-size:6.42px;color:#4a4a4a;">Процессы обработки</div>
<div class="t" style="left:289.75px;top:398px;font-size:6.42px;color:#4a4a4a;">документов</div>
<div class="a" style="left:368px;top:177px;width:35.75px;height:12.5px;background:linear-gradient(#fff,#f0f0f0);box-sizing:border-box;border:1px solid #C9C9C9;border-radius:1.5px;"></div>
<div class="a" style="left:386.25px;top:178px;width:0.7px;height:10.5px;background:#D8D8D8;"></div>
<svg class="a" style="left:373.62px;top:180.25px;" width="7" height="6" viewBox="0 0 7 6"><path d="M0.5 3 H6.5 M3 0.5 L0.5 3 L3 5.5" fill="none" stroke="#333" stroke-width="1.2"/></svg>
<svg class="a" style="left:391.5px;top:180.25px;" width="7" height="6" viewBox="0 0 7 6"><path d="M0.5 3 H6.5 M4 0.5 L6.5 3 L4 5.5" fill="none" stroke="#B5B5B5" stroke-width="1"/></svg>
<svg class="a" style="left:409.3px;top:178px;" width="11" height="10.4" viewBox="0 0 11.2 10.6"><path d="M5.6 0.6 L7.1 3.9 L10.6 4.2 L7.9 6.5 L8.8 10 L5.6 8.1 L2.4 10 L3.3 6.5 L0.6 4.2 L4.1 3.9 Z" fill="none" stroke="#CFCFCF" stroke-width="0.8"/></svg>
<div class="t" style="left:425.5px;top:177.85px;font-size:8.88px;color:#333;">Матрица талантов</div>
<svg class="a" style="left:876px;top:180.3px;" width="8" height="7.5" viewBox="0 0 8 7.5"><path d="M0.5 0.5 H6.5 L7.5 1.5 V7 H0.5 Z M2 0.5 V2.8 H6 V0.5 M2 7 V4.6 H6 V7" fill="none" stroke="#777" stroke-width="0.7"/></svg>
<svg class="a" style="left:891px;top:180.3px;" width="8.5" height="7.5" viewBox="0 0 8.5 7.5"><path d="M2.5 0.8 H6 V2.6 M1 2.6 H7.5 V5.5 H1 Z M2.5 4.5 H6 V7 H2.5 Z" fill="none" stroke="#777" stroke-width="0.7"/></svg>
<svg class="a" style="left:905.3px;top:180.3px;" width="8" height="7.5" viewBox="0 0 8 7.5"><path d="M5 7 H0.5 V0.5 H6.5 V3" fill="none" stroke="#777" stroke-width="0.7"/><circle cx="4.6" cy="4.6" r="1.6" fill="none" stroke="#777" stroke-width="0.7"/><path d="M5.8 5.8 L7.3 7.2" stroke="#777" stroke-width="0.8"/></svg>
<svg class="a" style="left:920.3px;top:180px;" width="8.5" height="8" viewBox="0 0 8.5 8"><path d="M3.2 3.6 L1.2 5.6 Q0.3 6.8 1.4 7.3 Q2.3 7.8 3.2 6.8 L4.3 5.7 M5.2 4.4 L7.2 2.4 Q8 1.2 7 0.7 Q6 0.2 5.2 1.2 L4.1 2.3 M3 5.3 L5.5 2.8" fill="none" stroke="#777" stroke-width="0.75"/></svg>
<svg class="a" style="left:935.8px;top:180px;" width="9" height="8" viewBox="0 0 9 8"><path d="M2 0.7 H8.3 V4.5 H7 V6 L5.6 4.5 H4 M0.7 2.2 H6 V5.8 H3 L1.7 7.4 V5.8 H0.7 Z" fill="none" stroke="#666" stroke-width="0.7"/></svg>
<div class="t" style="left:947.5px;top:180.99px;font-size:6.44px;color:#555;">Обсуждение</div>
<div class="a" style="left:1000px;top:180.7px;width:1.2px;height:1.2px;background:#666;"></div>
<div class="a" style="left:1000px;top:183.2px;width:1.2px;height:1.2px;background:#666;"></div>
<div class="a" style="left:1000px;top:185.7px;width:1.2px;height:1.2px;background:#666;"></div>
<svg class="a" style="left:1013.3px;top:181.5px;" width="4.5" height="4.5" viewBox="0 0 4.5 4.5"><path d="M0.4 0.4 L4.1 4.1 M4.1 0.4 L0.4 4.1" stroke="#777" stroke-width="0.8"/></svg>
<div class="a" style="left:367.5px;top:194px;width:651px;height:26.5px;background:#FDF5D9;"></div>
<div class="a" style="left:369.3px;top:196.8px;width:8.5px;height:8.5px;background:#fff;box-sizing:border-box;border:1px solid #F3D36A;border-radius:0.8px;"></div>
<div class="t" style="left:380.5px;top:198.25px;font-size:5.06px;color:#7d7d7d;">Сотрудник:</div>
<div class="a" style="left:409.5px;top:196.25px;width:138.5px;height:9.25px;background:#fff;box-sizing:border-box;border:1px solid #CFCFCF;border-radius:1px;"></div>
<div class="a" style="left:540.8px;top:197.2px;width:0.6px;height:7.4px;background:#E0E0E0;"></div>
<svg class="a" style="left:543px;top:200px;" width="3.5" height="2.5" viewBox="0 0 3.5 2.5"><path d="M0.2 0.2 H3.3 L1.75 2.2 Z" fill="#777"/></svg>
<div class="a" style="left:370.2px;top:211.2px;width:6.6px;height:6.6px;background:#fff;box-sizing:border-box;border:1px solid #BDBDBD;border-radius:0.8px;"></div>
<div class="t" style="left:380.5px;top:212.85px;font-size:4.87px;color:#7d7d7d;">Должность:</div>
<div class="a" style="left:409.5px;top:209.5px;width:138.5px;height:9.25px;background:#fff;box-sizing:border-box;border:1px solid #CFCFCF;border-radius:1px;"></div>
<div class="a" style="left:540.8px;top:210.5px;width:0.6px;height:7.3px;background:#E0E0E0;"></div>
<svg class="a" style="left:543px;top:213.3px;" width="3.5" height="2.5" viewBox="0 0 3.5 2.5"><path d="M0.2 0.2 H3.3 L1.75 2.2 Z" fill="#777"/></svg>
<div class="a" style="left:559px;top:197.5px;width:6.8px;height:6.8px;background:#fff;box-sizing:border-box;border:1px solid #BDBDBD;border-radius:0.8px;"></div>
<div class="t" style="left:566.5px;top:198.83px;font-size:4.89px;color:#7d7d7d;">Подразделение:</div>
<div class="a" style="left:607.25px;top:196.25px;width:138px;height:9.25px;background:#fff;box-sizing:border-box;border:1px solid #CFCFCF;border-radius:1px;"></div>
<div class="a" style="left:737.8px;top:197.2px;width:0.6px;height:7.4px;background:#E0E0E0;"></div>
<svg class="a" style="left:740px;top:200px;" width="3.5" height="2.5" viewBox="0 0 3.5 2.5"><path d="M0.2 0.2 H3.3 L1.75 2.2 Z" fill="#777"/></svg>
<div class="a" style="left:756.5px;top:197.5px;width:6.8px;height:6.8px;background:#fff;box-sizing:border-box;border:1px solid #BDBDBD;border-radius:0.8px;"></div>
<div class="t" style="left:763.8px;top:198.83px;font-size:4.89px;color:#7d7d7d;">Уровень матрицы:</div>
<div class="a" style="left:807.5px;top:196.25px;width:151.75px;height:9.25px;background:#fff;box-sizing:border-box;border:1px solid #CFCFCF;border-radius:1px;"></div>
<div class="a" style="left:951.2px;top:197.2px;width:0.6px;height:7.4px;background:#E0E0E0;"></div>
<svg class="a" style="left:953.8px;top:200px;" width="3.5" height="2.5" viewBox="0 0 3.5 2.5"><path d="M0.2 0.2 H3.3 L1.75 2.2 Z" fill="#777"/></svg>
<div class="a" style="left:1005px;top:195.5px;width:11.75px;height:10px;background:linear-gradient(#fff,#f2f2f2);box-sizing:border-box;border:1px solid #CFCFCF;border-radius:1.2px;"></div>
<svg class="a" style="left:1008.3px;top:197.8px;" width="5.5" height="5.5" viewBox="0 0 5.5 5.5"><path d="M0.3 0.5 H5.2 L3.3 2.8 V5 L2.2 4.4 V2.8 Z" fill="none" stroke="#888" stroke-width="0.6"/></svg>
<div class="a" style="left:368px;top:224.5px;width:49px;height:9.25px;background:linear-gradient(#FFE033,#F5C400);box-sizing:border-box;border:1px solid #D8AE00;border-radius:1.3px;"></div>
<div class="t" style="left:373px;top:225.99px;font-size:5.53px;color:#3a3a3a;">Сформировать</div>
<div class="a" style="left:424.5px;top:224.5px;width:54.25px;height:9.25px;background:linear-gradient(#fff,#f2f2f2);box-sizing:border-box;border:1px solid #CFCFCF;border-radius:1.2px;"></div>
<div class="a" style="left:463.5px;top:225.5px;width:0.6px;height:7.25px;background:#DADADA;"></div>
<div class="t" style="left:428.5px;top:225.94px;font-size:5.58px;color:#555;">Настройки...</div>
<svg class="a" style="left:465.5px;top:226.3px;" width="7" height="6" viewBox="0 0 7 6"><rect x="0.3" y="1.5" width="4.8" height="4.2" fill="#F2C45B" stroke="#C79A2C" stroke-width="0.5"/><rect x="2" y="0.3" width="4.6" height="4.4" fill="#fff" stroke="#999" stroke-width="0.5"/></svg>
<svg class="a" style="left:474.3px;top:228.3px;" width="3.2" height="2.3" viewBox="0 0 3.2 2.3"><path d="M0.2 0.2 H3 L1.6 2.1 Z" fill="#777"/></svg>
<div class="a" style="left:486.25px;top:224.5px;width:22.5px;height:9.25px;background:linear-gradient(#fff,#f2f2f2);box-sizing:border-box;border:1px solid #CFCFCF;border-radius:1.2px;"></div>
<div class="a" style="left:497.3px;top:225.5px;width:0.6px;height:7.25px;background:#DADADA;"></div>
<svg class="a" style="left:489.2px;top:226.3px;" width="6" height="6" viewBox="0 0 6 6"><circle cx="2.6" cy="2.6" r="1.9" fill="none" stroke="#3a78c2" stroke-width="0.8"/><path d="M3.9 3.9 L5.6 5.6" stroke="#3a78c2" stroke-width="0.9"/></svg>
<svg class="a" style="left:500.3px;top:226px;" width="6" height="6.5" viewBox="0 0 6 6.5"><circle cx="2.6" cy="2.6" r="1.9" fill="none" stroke="#3a78c2" stroke-width="0.8"/><path d="M3.9 3.9 L5.6 5.6 M1 5 L4 1" stroke="#3a78c2" stroke-width="0.8"/></svg>
<div class="a" style="left:516.25px;top:224.5px;width:77.25px;height:9.25px;background:linear-gradient(#fff,#f2f2f2);box-sizing:border-box;border:1px solid #CFCFCF;border-radius:1.2px;"></div>
<div class="a" style="left:527.5px;top:225.5px;width:0.6px;height:7.25px;background:#DADADA;"></div>
<div class="a" style="left:539.5px;top:225.5px;width:0.6px;height:7.25px;background:#DADADA;"></div>
<svg class="a" style="left:518.6px;top:226px;" width="7" height="6.5" viewBox="0 0 7 6.5"><path d="M2 0.5 V6 M0.6 4.6 L2 6 L3.4 4.6 M4.5 1 H6.5 M4.5 2.6 H6.5 M4.5 4.2 H6.5 M4.5 5.8 H6.5" fill="none" stroke="#C27F3A" stroke-width="0.6"/></svg>
<svg class="a" style="left:530px;top:226px;" width="7" height="6.5" viewBox="0 0 7 6.5"><path d="M1 0.5 V6 M2.5 1.5 H6.5 M2.5 3 H5 " fill="none" stroke="#666" stroke-width="0.7"/></svg>
<div class="t" style="left:543px;top:226.1px;font-size:5.22px;color:#555;">Разворачивать до</div>
<svg class="a" style="left:588.5px;top:228.3px;" width="3.2" height="2.3" viewBox="0 0 3.2 2.3"><path d="M0.2 0.2 H3 L1.6 2.1 Z" fill="#777"/></svg>
<div class="a" style="left:601.5px;top:224.5px;width:22px;height:9.25px;background:linear-gradient(#fff,#f2f2f2);box-sizing:border-box;border:1px solid #CFCFCF;border-radius:1.2px;"></div>
<div class="a" style="left:612.3px;top:225.5px;width:0.6px;height:7.25px;background:#DADADA;"></div>
<svg class="a" style="left:603.8px;top:226.2px;" width="6.5" height="6" viewBox="0 0 6.5 6"><path d="M1.5 0.5 H5 V2 M0.5 2 H6 V4.6 H0.5 Z M1.5 3.8 H5 V5.8 H1.5 Z" fill="#3a5f9a" stroke="#2a4a7a" stroke-width="0.4"/></svg>
<svg class="a" style="left:614.8px;top:226.2px;" width="6.5" height="6.5" viewBox="0 0 6.5 6.5"><path d="M4 6 H0.5 V0.5 H5 V2.5" fill="none" stroke="#3a5f9a" stroke-width="0.7"/><circle cx="3.6" cy="3.6" r="1.4" fill="none" stroke="#3a5f9a" stroke-width="0.7"/><path d="M4.6 4.6 L6 6" stroke="#3a5f9a" stroke-width="0.8"/></svg>
<div class="a" style="left:631px;top:224.5px;width:42.5px;height:9.25px;background:linear-gradient(#fff,#f2f2f2);box-sizing:border-box;border:1px solid #CFCFCF;border-radius:1.2px;"></div>
<svg class="a" style="left:634.3px;top:226.3px;" width="6" height="5.5" viewBox="0 0 6 5.5"><path d="M0.3 0.5 H5.6 L3.6 2.8 V5 L2.4 4.4 V2.8 Z" fill="none" stroke="#777" stroke-width="0.6"/></svg>
<div class="t" style="left:641.5px;top:226.18px;font-size:5.04px;color:#555;">Отправить</div>
<svg class="a" style="left:668.5px;top:228.3px;" width="3.2" height="2.3" viewBox="0 0 3.2 2.3"><path d="M0.2 0.2 H3 L1.6 2.1 Z" fill="#777"/></svg>
<div class="t" style="left:827.25px;top:225.22px;font-size:7px;color:#444;font-weight:bold;">Σ</div>
<div class="a" style="left:834.25px;top:224.5px;width:151.75px;height:10px;background:#fff;box-sizing:border-box;border:1px solid #CFCFCF;border-radius:1px;"></div>
<div class="t" style="left:836.5px;top:226.82px;font-size:4.9px;color:#C8C8C8;max-width:147px;overflow:hidden">Введите слово для фильтра (название товара, покупателя и кр</div>
<div class="t" style="left:988.8px;top:226.82px;font-size:5.8px;color:#3a8bd0;font-weight:bold;">?</div>
<div class="a" style="left:995.5px;top:224.5px;width:23px;height:10px;background:linear-gradient(#fff,#f2f2f2);box-sizing:border-box;border:1px solid #CFCFCF;border-radius:1.2px;"></div>
<div class="t" style="left:999px;top:226.52px;font-size:5.4px;color:#555;">Еще</div>
<svg class="a" style="left:1011.5px;top:228.8px;" width="3.2" height="2.3" viewBox="0 0 3.2 2.3"><path d="M0.2 0.2 H3 L1.6 2.1 Z" fill="#777"/></svg>
<div class="a" style="left:368px;top:237.2px;width:651px;height:282.8px;background:#fff;box-sizing:border-box;border:1px solid #D6D6D6;border-radius:0px;"></div>
<svg class="a" style="left:1013px;top:242.3px;" width="3.5" height="2.5" viewBox="0 0 3.5 2.5"><path d="M0.2 2.2 H3.3 L1.75 0.2 Z" fill="#777"/></svg>
<div class="a" style="left:1012.9px;top:249px;width:3.7px;height:263px;background:#D9D9D9;border-radius:1.8px"></div>
<div class="a" style="left:1012.9px;top:254.7px;width:3.7px;height:36.9px;background:#A3A3A3;border-radius:1.8px"></div>
<div class="t" style="left:387px;top:238.17px;font-size:5.05px;color:#5c5c5c;">Оценка потенциала</div>
<div class="t" style="left:483.9px;top:238.17px;font-size:5.05px;color:#5c5c5c;">Оценка дирекции по персон... ; Опрос по компетенциям</div>
<div class="t" style="left:483.9px;top:244.17px;font-size:5.05px;color:#5c5c5c;">сот...</div>
<div class="t" style="left:387px;top:251.17px;font-size:5.05px;color:#5c5c5c;">Подразделение</div>
<div class="t" style="left:483.9px;top:251.17px;font-size:5.05px;color:#5c5c5c;">Дирекция по персоналу</div>
<div class="t" style="left:387px;top:258.17px;font-size:5.05px;color:#5c5c5c;">Включая подчиненные подразделения</div>
<div class="t" style="left:483.9px;top:258.17px;font-size:5.05px;color:#5c5c5c;">Да</div>
<div class="t" style="left:387px;top:264.17px;font-size:5.05px;color:#5c5c5c;">Физические лица</div>
<div class="a" style="left:385.1px;top:282.3px;width:609.65px;height:0.7px;background:#EBEBEB;"></div>
<div class="a" style="left:385.1px;top:291.25px;width:252.4px;height:0.6px;background:#EBEBEB;"></div>
<div class="a" style="left:385.1px;top:299.5px;width:252.4px;height:0.6px;background:#EBEBEB;"></div>
<div class="a" style="left:385.1px;top:307.3px;width:609.65px;height:0.6px;background:#EBEBEB;"></div>
<div class="t" style="left:387px;top:284.72px;font-size:6px;color:#404040;">Сотрудник</div>
<div class="t" style="left:387px;top:292.72px;font-size:6px;color:#404040;">Регистратор</div>
<div class="t" style="left:387px;top:300.72px;font-size:6px;color:#404040;">Показатель</div>
<div class="t" style="left:472.8px;top:284.72px;font-size:6px;color:#404040;">Должность</div>
<div class="t" style="left:575.6px;top:284.72px;font-size:6px;color:#404040;">Подразделение</div>
<div class="t" style="left:639.4px;top:284.72px;font-size:6px;color:#404040;">Взвешенная оценка</div>
<div class="t" style="left:639.4px;top:291.72px;font-size:6px;color:#404040;">эффективности по матрице</div>
<div class="t" style="left:639.4px;top:299.72px;font-size:6px;color:#404040;">талантов (значение)</div>
<div class="t" style="left:724px;top:284.72px;font-size:6px;color:#404040;">Взвешенная оценка</div>
<div class="t" style="left:724px;top:291.72px;font-size:6px;color:#404040;">эффективности</div>
<div class="t" style="left:724px;top:299.72px;font-size:6px;color:#404040;">(уровень)</div>
<div class="t" style="left:787px;top:284.72px;font-size:6px;color:#404040;">Взвешенная оценка</div>
<div class="t" style="left:787px;top:291.72px;font-size:6px;color:#404040;">потенциала по матрице</div>
<div class="t" style="left:787px;top:299.72px;font-size:6px;color:#404040;">талантов (значение)</div>
<div class="t" style="left:860px;top:284.72px;font-size:6px;color:#404040;">Взвешенная оценка</div>
<div class="t" style="left:860px;top:291.72px;font-size:6px;color:#404040;">потенциала по матрице</div>
<div class="t" style="left:860px;top:299.72px;font-size:6px;color:#404040;">талантов (уровень)</div>
<div class="t" style="left:933.5px;top:284.72px;font-size:6px;color:#404040;">Уровень матрицы</div>
<div class="t" style="left:387px;top:308.16px;font-size:5.16px;color:#333;font-weight:bold;">Громова Надежда Петровна</div>
<div class="t" style="left:472.8px;top:308.22px;font-size:5px;color:#5c5c5c;">Директор по персоналу</div>
<div class="t" style="left:575.6px;top:308.22px;font-size:5px;color:#5c5c5c;">Дирекция по персоналу</div>
<div class="a" style="left:471.2px;top:307.75px;width:0.6px;height:6.63px;background:#EAEAEA;"></div>
<div class="t" style="left:702.64px;top:308.22px;font-size:5px;color:#5c5c5c;">94,44%</div>
<div class="t" style="left:724px;top:308.22px;font-size:5px;color:#6a6a6a;">высокий</div>
<div class="t" style="left:839.84px;top:308.22px;font-size:5px;color:#5c5c5c;">83,98%</div>
<div class="t" style="left:860px;top:308.22px;font-size:5px;color:#6a6a6a;">высокий</div>
<div class="t" style="left:933.5px;top:308.12px;font-size:5.2px;color:#111;-webkit-text-stroke:0.1px #111">Звезда</div>
<div class="a" style="left:385.1px;top:314.08px;width:609.65px;height:0.6px;background:#F1F1F1;"></div>
<div class="t" style="left:394.25px;top:314.22px;font-size:5px;color:#5c5c5c;">Факт сотрудника 00-00000028 от 31.10.2025</div>
<div class="t" style="left:702.64px;top:314.22px;font-size:5px;color:#5c5c5c;">94,44%</div>
<div class="t" style="left:724px;top:314.22px;font-size:5px;color:#6a6a6a;">высокий</div>
<div class="t" style="left:860px;top:314.22px;font-size:5px;color:#6a6a6a;">высокий</div>
<div class="t" style="left:933.5px;top:314.12px;font-size:5.2px;color:#111;-webkit-text-stroke:0.1px #111">Звезда</div>
<div class="a" style="left:385.1px;top:320.71px;width:609.65px;height:0.6px;background:#F1F1F1;"></div>
<div class="t" style="left:401.5px;top:321.22px;font-size:5px;color:#5c5c5c;">% кандидатов, отработавших испытательный срок</div>
<div class="t" style="left:699.86px;top:321.22px;font-size:5px;color:#5c5c5c;">100,00%</div>
<div class="t" style="left:724px;top:321.22px;font-size:5px;color:#6a6a6a;">высокий</div>
<div class="t" style="left:860px;top:321.22px;font-size:5px;color:#6a6a6a;">высокий</div>
<div class="t" style="left:933.5px;top:321.12px;font-size:5.2px;color:#111;-webkit-text-stroke:0.1px #111">Звезда</div>
<div class="a" style="left:385.1px;top:327.34px;width:609.65px;height:0.6px;background:#F1F1F1;"></div>
<div class="t" style="left:401.5px;top:328.22px;font-size:5px;color:#5c5c5c;">Исполнение плана обучения сотрудников</div>
<div class="t" style="left:702.64px;top:328.22px;font-size:5px;color:#5c5c5c;">88,89%</div>
<div class="t" style="left:724px;top:328.22px;font-size:5px;color:#6a6a6a;">высокий</div>
<div class="t" style="left:860px;top:328.22px;font-size:5px;color:#6a6a6a;">высокий</div>
<div class="t" style="left:933.5px;top:328.12px;font-size:5.2px;color:#111;-webkit-text-stroke:0.1px #111">Звезда</div>
<div class="a" style="left:385.1px;top:333.97px;width:609.65px;height:0.6px;background:#F1F1F1;"></div>
<div class="t" style="left:394.25px;top:334.22px;font-size:5px;color:#5c5c5c;">Опрос по компетенциям сотрудников дирекции по персоналу</div>
<div class="t" style="left:724px;top:334.22px;font-size:5px;color:#6a6a6a;">высокий</div>
<div class="t" style="left:837.06px;top:334.22px;font-size:5px;color:#5c5c5c;">100,00%</div>
<div class="t" style="left:860px;top:334.22px;font-size:5px;color:#6a6a6a;">высокий</div>
<div class="t" style="left:933.5px;top:334.12px;font-size:5.2px;color:#111;-webkit-text-stroke:0.1px #111">Звезда</div>
<div class="a" style="left:385.1px;top:340.6px;width:609.65px;height:0.6px;background:#F1F1F1;"></div>
<div class="t" style="left:401.5px;top:341.22px;font-size:5px;color:#5c5c5c;">Презентация</div>
<div class="t" style="left:724px;top:341.22px;font-size:5px;color:#6a6a6a;">высокий</div>
<div class="t" style="left:837.06px;top:341.22px;font-size:5px;color:#5c5c5c;">100,00%</div>
<div class="t" style="left:860px;top:341.22px;font-size:5px;color:#6a6a6a;">высокий</div>
<div class="t" style="left:933.5px;top:341.12px;font-size:5.2px;color:#111;-webkit-text-stroke:0.1px #111">Звезда</div>
<div class="a" style="left:385.1px;top:347.23px;width:609.65px;height:0.6px;background:#F1F1F1;"></div>
<div class="t" style="left:401.5px;top:348.22px;font-size:5px;color:#5c5c5c;">Подготовка отчетов</div>
<div class="t" style="left:724px;top:348.22px;font-size:5px;color:#6a6a6a;">высокий</div>
<div class="t" style="left:837.06px;top:348.22px;font-size:5px;color:#5c5c5c;">100,00%</div>
<div class="t" style="left:860px;top:348.22px;font-size:5px;color:#6a6a6a;">высокий</div>
<div class="t" style="left:933.5px;top:348.12px;font-size:5.2px;color:#111;-webkit-text-stroke:0.1px #111">Звезда</div>
<div class="a" style="left:385.1px;top:353.86px;width:609.65px;height:0.6px;background:#F1F1F1;"></div>
<div class="t" style="left:401.5px;top:354.22px;font-size:5px;color:#5c5c5c;">Технологии межличностной и групповой коммуникаций</div>
<div class="t" style="left:724px;top:354.22px;font-size:5px;color:#6a6a6a;">высокий</div>
<div class="t" style="left:837.06px;top:354.22px;font-size:5px;color:#5c5c5c;">100,00%</div>
<div class="t" style="left:860px;top:354.22px;font-size:5px;color:#6a6a6a;">высокий</div>
<div class="t" style="left:933.5px;top:354.12px;font-size:5.2px;color:#111;-webkit-text-stroke:0.1px #111">Звезда</div>
<div class="a" style="left:385.1px;top:360.49px;width:609.65px;height:0.6px;background:#F1F1F1;"></div>
<div class="t" style="left:401.5px;top:361.22px;font-size:5px;color:#5c5c5c;">Собирать, анализировать и структурировать информацию</div>
<div class="t" style="left:724px;top:361.22px;font-size:5px;color:#6a6a6a;">высокий</div>
<div class="t" style="left:837.06px;top:361.22px;font-size:5px;color:#5c5c5c;">100,00%</div>
<div class="t" style="left:860px;top:361.22px;font-size:5px;color:#6a6a6a;">высокий</div>
<div class="t" style="left:933.5px;top:361.12px;font-size:5.2px;color:#111;-webkit-text-stroke:0.1px #111">Звезда</div>
<div class="a" style="left:385.1px;top:367.12px;width:609.65px;height:0.6px;background:#F1F1F1;"></div>
<div class="t" style="left:394.25px;top:368.22px;font-size:5px;color:#5c5c5c;">Оценка дирекции по персоналу Октябрь</div>
<div class="t" style="left:724px;top:368.22px;font-size:5px;color:#6a6a6a;">высокий</div>
<div class="t" style="left:839.84px;top:368.22px;font-size:5px;color:#5c5c5c;">75,97%</div>
<div class="t" style="left:860px;top:368.22px;font-size:5px;color:#6a6a6a;">высокий</div>
<div class="t" style="left:933.5px;top:368.12px;font-size:5.2px;color:#111;-webkit-text-stroke:0.1px #111">Звезда</div>
<div class="a" style="left:385.1px;top:373.75px;width:609.65px;height:0.6px;background:#F1F1F1;"></div>
<div class="t" style="left:401.5px;top:374.22px;font-size:5px;color:#5c5c5c;">Желание мотивировать</div>
<div class="t" style="left:724px;top:374.22px;font-size:5px;color:#6a6a6a;">высокий</div>
<div class="t" style="left:837.06px;top:374.22px;font-size:5px;color:#5c5c5c;">100,00%</div>
<div class="t" style="left:860px;top:374.22px;font-size:5px;color:#6a6a6a;">высокий</div>
<div class="t" style="left:933.5px;top:374.12px;font-size:5.2px;color:#111;-webkit-text-stroke:0.1px #111">Звезда</div>
<div class="a" style="left:385.1px;top:380.38px;width:609.65px;height:0.6px;background:#F1F1F1;"></div>
<div class="t" style="left:401.5px;top:381.22px;font-size:5px;color:#5c5c5c;">Желание обучать</div>
<div class="t" style="left:724px;top:381.22px;font-size:5px;color:#6a6a6a;">высокий</div>
<div class="t" style="left:837.06px;top:381.22px;font-size:5px;color:#5c5c5c;">100,00%</div>
<div class="t" style="left:860px;top:381.22px;font-size:5px;color:#6a6a6a;">высокий</div>
<div class="t" style="left:933.5px;top:381.12px;font-size:5.2px;color:#111;-webkit-text-stroke:0.1px #111">Звезда</div>
<div class="a" style="left:385.1px;top:387.01px;width:609.65px;height:0.6px;background:#F1F1F1;"></div>
<div class="t" style="left:401.5px;top:387.22px;font-size:5px;color:#5c5c5c;">Неконфликтность</div>
<div class="t" style="left:724px;top:387.22px;font-size:5px;color:#6a6a6a;">высокий</div>
<div class="t" style="left:840.21px;top:387.22px;font-size:5px;color:#5c5c5c;">91,11%</div>
<div class="t" style="left:860px;top:387.22px;font-size:5px;color:#6a6a6a;">высокий</div>
<div class="t" style="left:933.5px;top:387.12px;font-size:5.2px;color:#111;-webkit-text-stroke:0.1px #111">Звезда</div>
<div class="a" style="left:385.1px;top:393.64px;width:609.65px;height:0.6px;background:#F1F1F1;"></div>
<div class="t" style="left:401.5px;top:394.22px;font-size:5px;color:#5c5c5c;">Работоспособность</div>
<div class="t" style="left:724px;top:394.22px;font-size:5px;color:#6a6a6a;">высокий</div>
<div class="t" style="left:839.84px;top:394.22px;font-size:5px;color:#5c5c5c;">83,33%</div>
<div class="t" style="left:860px;top:394.22px;font-size:5px;color:#6a6a6a;">высокий</div>
<div class="t" style="left:933.5px;top:394.12px;font-size:5.2px;color:#111;-webkit-text-stroke:0.1px #111">Звезда</div>
<div class="a" style="left:385.1px;top:400.27px;width:609.65px;height:0.6px;background:#F1F1F1;"></div>
<div class="t" style="left:401.5px;top:401.22px;font-size:5px;color:#5c5c5c;">Самоконтроль</div>
<div class="t" style="left:724px;top:401.22px;font-size:5px;color:#6a6a6a;">высокий</div>
<div class="t" style="left:839.84px;top:401.22px;font-size:5px;color:#5c5c5c;">83,33%</div>
<div class="t" style="left:860px;top:401.22px;font-size:5px;color:#6a6a6a;">высокий</div>
<div class="t" style="left:933.5px;top:401.12px;font-size:5.2px;color:#111;-webkit-text-stroke:0.1px #111">Звезда</div>
<div class="a" style="left:385.1px;top:406.9px;width:609.65px;height:0.6px;background:#F1F1F1;"></div>
<div class="t" style="left:401.5px;top:407.22px;font-size:5px;color:#5c5c5c;">Стрессоустойчивость</div>
<div class="t" style="left:724px;top:407.22px;font-size:5px;color:#6a6a6a;">высокий</div>
<div class="t" style="left:839.84px;top:407.22px;font-size:5px;color:#5c5c5c;">50,00%</div>
<div class="t" style="left:860px;top:407.22px;font-size:5px;color:#6a6a6a;">высокий</div>
<div class="t" style="left:933.5px;top:407.12px;font-size:5.2px;color:#111;-webkit-text-stroke:0.1px #111">Звезда</div>
<div class="a" style="left:385.1px;top:413.53px;width:609.65px;height:0.6px;background:#F1F1F1;"></div>
<div class="t" style="left:401.5px;top:414.22px;font-size:5px;color:#5c5c5c;">Желание обучать</div>
<div class="t" style="left:724px;top:414.22px;font-size:5px;color:#6a6a6a;">высокий</div>
<div class="t" style="left:839.84px;top:414.22px;font-size:5px;color:#5c5c5c;">16,67%</div>
<div class="t" style="left:860px;top:414.22px;font-size:5px;color:#6a6a6a;">высокий</div>
<div class="t" style="left:933.5px;top:414.12px;font-size:5.2px;color:#111;-webkit-text-stroke:0.1px #111">Звезда</div>
<div class="a" style="left:385.1px;top:420.16px;width:609.65px;height:0.6px;background:#F1F1F1;"></div>
<div class="t" style="left:401.5px;top:421.22px;font-size:5px;color:#5c5c5c;">Самостоятельность</div>
<div class="t" style="left:724px;top:421.22px;font-size:5px;color:#6a6a6a;">высокий</div>
<div class="t" style="left:839.84px;top:421.22px;font-size:5px;color:#5c5c5c;">83,33%</div>
<div class="t" style="left:860px;top:421.22px;font-size:5px;color:#6a6a6a;">высокий</div>
<div class="t" style="left:933.5px;top:421.12px;font-size:5.2px;color:#111;-webkit-text-stroke:0.1px #111">Звезда</div>
<div class="a" style="left:385.1px;top:426.79px;width:609.65px;height:0.6px;background:#F1F1F1;"></div>
<div class="t" style="left:387px;top:427.16px;font-size:5.16px;color:#333;font-weight:bold;">Габровская Светлана</div>
<div class="t" style="left:387px;top:434.16px;font-size:5.16px;color:#333;font-weight:bold;">Марковна</div>
<div class="t" style="left:472.8px;top:427.22px;font-size:5px;color:#5c5c5c;">Начальник отдела</div>
<div class="t" style="left:575.6px;top:427.22px;font-size:5px;color:#5c5c5c;">Отдел обучения</div>
<div class="a" style="left:471.2px;top:427.09px;width:0.6px;height:12.6px;background:#EAEAEA;"></div>
<div class="t" style="left:702.64px;top:427.22px;font-size:5px;color:#5c5c5c;">90,00%</div>
<div class="t" style="left:724px;top:427.22px;font-size:5px;color:#6a6a6a;">высокий</div>
<div class="t" style="left:839.84px;top:427.22px;font-size:5px;color:#5c5c5c;">81,97%</div>
<div class="t" style="left:860px;top:427.22px;font-size:5px;color:#6a6a6a;">высокий</div>
<div class="t" style="left:933.5px;top:427.12px;font-size:5.2px;color:#111;-webkit-text-stroke:0.1px #111">Звезда</div>
<div class="a" style="left:385.1px;top:439.39px;width:609.65px;height:0.6px;background:#F1F1F1;"></div>
<div class="t" style="left:394.25px;top:440.22px;font-size:5px;color:#5c5c5c;">Факт сотрудника 00-00000024 от 31.10.2025</div>
<div class="t" style="left:702.64px;top:440.22px;font-size:5px;color:#5c5c5c;">90,00%</div>
<div class="t" style="left:724px;top:440.22px;font-size:5px;color:#6a6a6a;">высокий</div>
<div class="t" style="left:860px;top:440.22px;font-size:5px;color:#6a6a6a;">высокий</div>
<div class="t" style="left:933.5px;top:440.12px;font-size:5.2px;color:#111;-webkit-text-stroke:0.1px #111">Звезда</div>
<div class="a" style="left:385.1px;top:446.02px;width:609.65px;height:0.6px;background:#F1F1F1;"></div>
<div class="t" style="left:401.5px;top:446.22px;font-size:5px;color:#5c5c5c;">% обученных с оценкой 4 и 5</div>
<div class="t" style="left:699.86px;top:446.22px;font-size:5px;color:#5c5c5c;">100,00%</div>
<div class="t" style="left:724px;top:446.22px;font-size:5px;color:#6a6a6a;">высокий</div>
<div class="t" style="left:860px;top:446.22px;font-size:5px;color:#6a6a6a;">высокий</div>
<div class="t" style="left:933.5px;top:446.12px;font-size:5.2px;color:#111;-webkit-text-stroke:0.1px #111">Звезда</div>
<div class="a" style="left:385.1px;top:452.65px;width:609.65px;height:0.6px;background:#F1F1F1;"></div>
<div class="t" style="left:401.5px;top:453.22px;font-size:5px;color:#5c5c5c;">Исполнение плана обучения сотрудников</div>
<div class="t" style="left:702.64px;top:453.22px;font-size:5px;color:#5c5c5c;">80,00%</div>
<div class="t" style="left:724px;top:453.22px;font-size:5px;color:#6a6a6a;">высокий</div>
<div class="t" style="left:860px;top:453.22px;font-size:5px;color:#6a6a6a;">высокий</div>
<div class="t" style="left:933.5px;top:453.12px;font-size:5.2px;color:#111;-webkit-text-stroke:0.1px #111">Звезда</div>
<div class="a" style="left:385.1px;top:459.28px;width:609.65px;height:0.6px;background:#F1F1F1;"></div>
<div class="t" style="left:394.25px;top:460.22px;font-size:5px;color:#5c5c5c;">Опрос по компетенциям сотрудников дирекции по персоналу</div>
<div class="t" style="left:724px;top:460.22px;font-size:5px;color:#6a6a6a;">высокий</div>
<div class="t" style="left:837.06px;top:460.22px;font-size:5px;color:#5c5c5c;">100,00%</div>
<div class="t" style="left:860px;top:460.22px;font-size:5px;color:#6a6a6a;">высокий</div>
<div class="t" style="left:933.5px;top:460.12px;font-size:5.2px;color:#111;-webkit-text-stroke:0.1px #111">Звезда</div>
<div class="a" style="left:385.1px;top:465.91px;width:609.65px;height:0.6px;background:#F1F1F1;"></div>
<div class="t" style="left:401.5px;top:466.22px;font-size:5px;color:#5c5c5c;">Подготовка отчетов</div>
<div class="t" style="left:724px;top:466.22px;font-size:5px;color:#6a6a6a;">высокий</div>
<div class="t" style="left:837.06px;top:466.22px;font-size:5px;color:#5c5c5c;">100,00%</div>
<div class="t" style="left:860px;top:466.22px;font-size:5px;color:#6a6a6a;">высокий</div>
<div class="t" style="left:933.5px;top:466.12px;font-size:5.2px;color:#111;-webkit-text-stroke:0.1px #111">Звезда</div>
<div class="a" style="left:385.1px;top:472.54px;width:609.65px;height:0.6px;background:#F1F1F1;"></div>
<div class="t" style="left:401.5px;top:473.22px;font-size:5px;color:#5c5c5c;">Собирать, анализировать и структурировать информацию</div>
<div class="t" style="left:724px;top:473.22px;font-size:5px;color:#6a6a6a;">высокий</div>
<div class="t" style="left:837.06px;top:473.22px;font-size:5px;color:#5c5c5c;">100,00%</div>
<div class="t" style="left:860px;top:473.22px;font-size:5px;color:#6a6a6a;">высокий</div>
<div class="t" style="left:933.5px;top:473.12px;font-size:5.2px;color:#111;-webkit-text-stroke:0.1px #111">Звезда</div>
<div class="a" style="left:385.1px;top:479.17px;width:609.65px;height:0.6px;background:#F1F1F1;"></div>
<div class="t" style="left:401.5px;top:480.22px;font-size:5px;color:#5c5c5c;">Презентация</div>
<div class="t" style="left:724px;top:480.22px;font-size:5px;color:#6a6a6a;">высокий</div>
<div class="t" style="left:837.06px;top:480.22px;font-size:5px;color:#5c5c5c;">100,00%</div>
<div class="t" style="left:860px;top:480.22px;font-size:5px;color:#6a6a6a;">высокий</div>
<div class="t" style="left:933.5px;top:480.12px;font-size:5.2px;color:#111;-webkit-text-stroke:0.1px #111">Звезда</div>
<div class="a" style="left:385.1px;top:485.8px;width:609.65px;height:0.6px;background:#F1F1F1;"></div>
<div class="t" style="left:401.5px;top:486.22px;font-size:5px;color:#5c5c5c;">Технологии межличностной и групповой коммуникаций</div>
<div class="t" style="left:724px;top:486.22px;font-size:5px;color:#6a6a6a;">высокий</div>
<div class="t" style="left:837.06px;top:486.22px;font-size:5px;color:#5c5c5c;">100,00%</div>
<div class="t" style="left:860px;top:486.22px;font-size:5px;color:#6a6a6a;">высокий</div>
<div class="t" style="left:933.5px;top:486.12px;font-size:5.2px;color:#111;-webkit-text-stroke:0.1px #111">Звезда</div>
<div class="a" style="left:385.1px;top:492.43px;width:609.65px;height:0.6px;background:#F1F1F1;"></div>
<div class="t" style="left:394.25px;top:493.22px;font-size:5px;color:#5c5c5c;">Оценка дирекции по персоналу Октябрь</div>
<div class="t" style="left:724px;top:493.22px;font-size:5px;color:#6a6a6a;">высокий</div>
<div class="t" style="left:839.84px;top:493.22px;font-size:5px;color:#5c5c5c;">72,95%</div>
<div class="t" style="left:860px;top:493.22px;font-size:5px;color:#6a6a6a;">высокий</div>
<div class="t" style="left:933.5px;top:493.12px;font-size:5.2px;color:#111;-webkit-text-stroke:0.1px #111">Звезда</div>
<div class="a" style="left:385.1px;top:499.06px;width:609.65px;height:0.6px;background:#F1F1F1;"></div>
<div class="t" style="left:401.5px;top:499.22px;font-size:5px;color:#5c5c5c;">Работоспособность</div>
<div class="t" style="left:724px;top:499.22px;font-size:5px;color:#6a6a6a;">высокий</div>
<div class="t" style="left:839.84px;top:499.22px;font-size:5px;color:#5c5c5c;">77,78%</div>
<div class="t" style="left:860px;top:499.22px;font-size:5px;color:#6a6a6a;">высокий</div>
<div class="t" style="left:933.5px;top:499.12px;font-size:5.2px;color:#111;-webkit-text-stroke:0.1px #111">Звезда</div>
<div class="a" style="left:385.1px;top:505.69px;width:609.65px;height:0.6px;background:#F1F1F1;"></div>
<div class="t" style="left:401.5px;top:506.22px;font-size:5px;color:#5c5c5c;">Желание обучать</div>
<div class="t" style="left:724px;top:506.22px;font-size:5px;color:#6a6a6a;">высокий</div>
<div class="t" style="left:839.84px;top:506.22px;font-size:5px;color:#5c5c5c;">93,33%</div>
<div class="t" style="left:860px;top:506.22px;font-size:5px;color:#6a6a6a;">высокий</div>
<div class="t" style="left:933.5px;top:506.12px;font-size:5.2px;color:#111;-webkit-text-stroke:0.1px #111">Звезда</div>
<div class="a" style="left:385.1px;top:512.32px;width:609.65px;height:0.6px;background:#F1F1F1;"></div>
<div class="t" style="left:401.5px;top:513.22px;font-size:5px;color:#5c5c5c;">Самостоятельность</div>
<div class="t" style="left:724px;top:513.22px;font-size:5px;color:#6a6a6a;">высокий</div>
<div class="t" style="left:839.84px;top:513.22px;font-size:5px;color:#5c5c5c;">83,33%</div>
<div class="t" style="left:860px;top:513.22px;font-size:5px;color:#6a6a6a;">высокий</div>
<div class="t" style="left:933.5px;top:513.12px;font-size:5.2px;color:#111;-webkit-text-stroke:0.1px #111">Звезда</div>
<div class="a" style="left:385.1px;top:518.95px;width:609.65px;height:0.6px;background:#F1F1F1;"></div>
<div class="a" style="left:384.8px;top:282.3px;width:0.6px;height:229.7px;background:#D6D6D6;"></div>
<div class="a" style="left:471.2px;top:282.3px;width:0.6px;height:9.2px;background:#E6E6E6;"></div>
<div class="a" style="left:574.2px;top:282.3px;width:0.6px;height:9.2px;background:#E6E6E6;"></div>
<div class="a" style="left:637.2px;top:282.3px;width:0.6px;height:229.7px;background:#E6E6E6;"></div>
<div class="a" style="left:722.2px;top:282.3px;width:0.6px;height:229.7px;background:#E6E6E6;"></div>
<div class="a" style="left:785.2px;top:282.3px;width:0.6px;height:229.7px;background:#E6E6E6;"></div>
<div class="a" style="left:858.2px;top:282.3px;width:0.6px;height:229.7px;background:#E6E6E6;"></div>
<div class="a" style="left:931.95px;top:282.3px;width:0.6px;height:229.7px;background:#E6E6E6;"></div>
<div class="a" style="left:994.45px;top:282.3px;width:0.6px;height:229.7px;background:#E6E6E6;"></div>
<div class="a" style="left:371.3px;top:313px;width:0.6px;height:199px;background:#D4D4D4;"></div>
<div class="a" style="left:369.1px;top:308.5px;width:5px;height:5px;background:#fff;box-sizing:border-box;border:1px solid #D4D4D4;border-radius:0.5px;"></div>
<div class="a" style="left:370.1px;top:310.7px;width:3px;height:0.6px;background:#888;"></div>
<div class="a" style="left:377.1px;top:317.5px;width:0.6px;height:16px;background:#D4D4D4;"></div>
<div class="a" style="left:377.1px;top:333.5px;width:7.9px;height:0.6px;background:#D4D4D4;"></div>
<div class="a" style="left:374.9px;top:315px;width:5px;height:5px;background:#fff;box-sizing:border-box;border:1px solid #D4D4D4;border-radius:0.5px;"></div>
<div class="a" style="left:375.9px;top:317.2px;width:3px;height:0.6px;background:#888;"></div>
<div class="a" style="left:377.1px;top:337.5px;width:0.6px;height:29.5px;background:#D4D4D4;"></div>
<div class="a" style="left:377.1px;top:367px;width:7.9px;height:0.6px;background:#D4D4D4;"></div>
<div class="a" style="left:374.9px;top:335px;width:5px;height:5px;background:#fff;box-sizing:border-box;border:1px solid #D4D4D4;border-radius:0.5px;"></div>
<div class="a" style="left:375.9px;top:337.2px;width:3px;height:0.6px;background:#888;"></div>
<div class="a" style="left:377.1px;top:364px;width:0.6px;height:64px;background:#D4D4D4;"></div>
<div class="a" style="left:377.1px;top:428px;width:7.9px;height:0.6px;background:#D4D4D4;"></div>
<div class="a" style="left:374.9px;top:361.5px;width:5px;height:5px;background:#fff;box-sizing:border-box;border:1px solid #D4D4D4;border-radius:0.5px;"></div>
<div class="a" style="left:375.9px;top:363.7px;width:3px;height:0.6px;background:#888;"></div>
<div class="a" style="left:369.1px;top:430.5px;width:5px;height:5px;background:#fff;box-sizing:border-box;border:1px solid #D4D4D4;border-radius:0.5px;"></div>
<div class="a" style="left:370.1px;top:432.7px;width:3px;height:0.6px;background:#888;"></div>
<div class="a" style="left:377.1px;top:443.5px;width:0.6px;height:15.5px;background:#D4D4D4;"></div>
<div class="a" style="left:377.1px;top:459px;width:7.9px;height:0.6px;background:#D4D4D4;"></div>
<div class="a" style="left:374.9px;top:441px;width:5px;height:5px;background:#fff;box-sizing:border-box;border:1px solid #D4D4D4;border-radius:0.5px;"></div>
<div class="a" style="left:375.9px;top:443.2px;width:3px;height:0.6px;background:#888;"></div>
<div class="a" style="left:377.1px;top:463px;width:0.6px;height:29px;background:#D4D4D4;"></div>
<div class="a" style="left:377.1px;top:492px;width:7.9px;height:0.6px;background:#D4D4D4;"></div>
<div class="a" style="left:374.9px;top:460.5px;width:5px;height:5px;background:#fff;box-sizing:border-box;border:1px solid #D4D4D4;border-radius:0.5px;"></div>
<div class="a" style="left:375.9px;top:462.7px;width:3px;height:0.6px;background:#888;"></div>
<div class="a" style="left:377.1px;top:496px;width:0.6px;height:16px;background:#D4D4D4;"></div>
<div class="a" style="left:377.1px;top:512px;width:7.9px;height:0.6px;background:#D4D4D4;"></div>
<div class="a" style="left:374.9px;top:493.5px;width:5px;height:5px;background:#fff;box-sizing:border-box;border:1px solid #D4D4D4;border-radius:0.5px;"></div>
<div class="a" style="left:375.9px;top:495.7px;width:3px;height:0.6px;background:#888;"></div>
<svg class="a" style="left:1020px;top:507.5px;" width="4" height="4.5" viewBox="0 0 4 4.5"><path d="M0.3 4.5 L4 0.5 L4 4.5 Z" fill="#111"/></svg>
<svg class="a" style="left:945px;top:310.5px;" width="6" height="7" viewBox="0 0 6 7"><path d="M0.5 0.5 L0.5 6 L2 4.6 L3.2 6.6 L4 6.2 L2.9 4.3 L4.8 4.3 Z" fill="#fff" stroke="#222" stroke-width="0.6"/></svg>
</div></div>
</body></html>
